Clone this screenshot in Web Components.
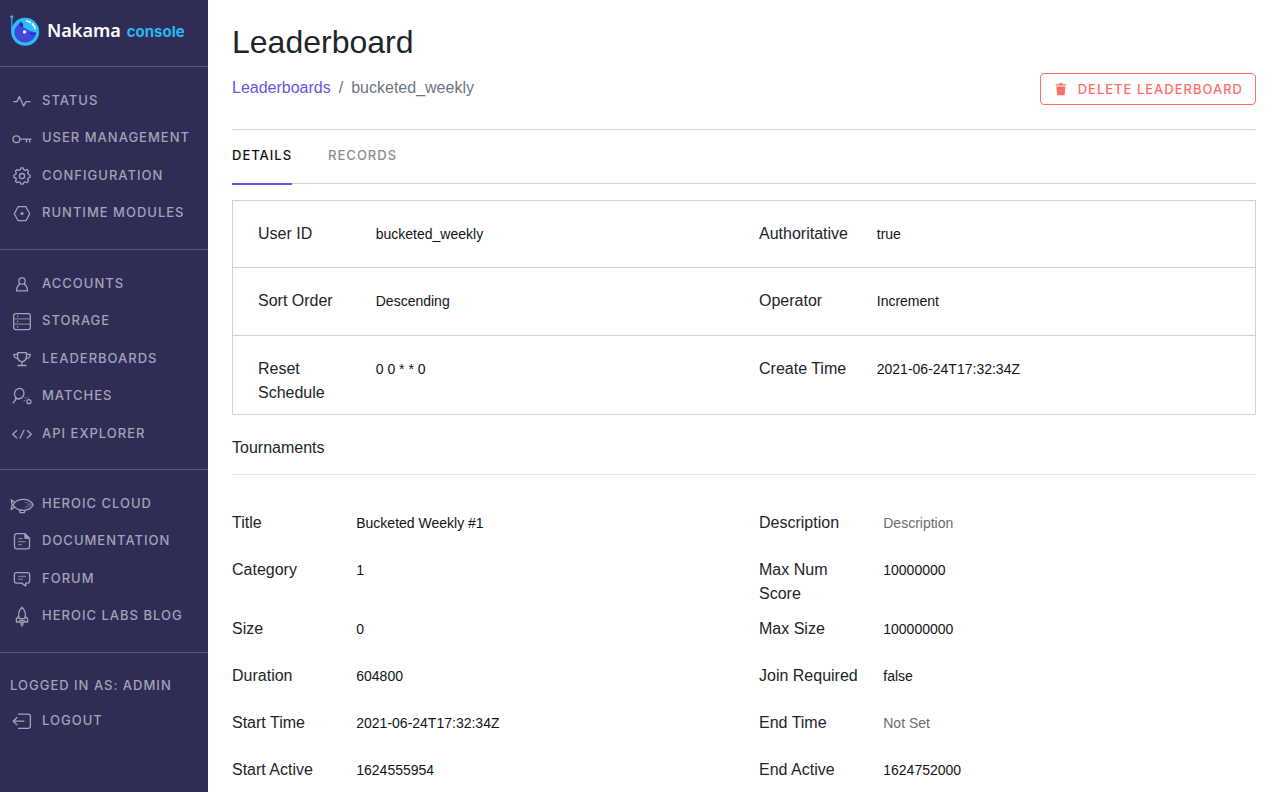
<!DOCTYPE html>
<html lang="en">
<head>
<meta charset="utf-8">
<meta name="viewport" content="width=device-width, initial-scale=1">
<title>Nakama Console - Leaderboard</title>
<style>
  :root {
    --navy: #2f2d56;
    --violet: #6d52e3;
    --coral: #ff6d69;
    --ink: #212529;
    --rule: #d2d0e0;
    --ui: Inter, "Open Sans", sans-serif;
  }
  body { margin: 0; color: var(--ink); background: #fff; font: 16px/24px "Liberation Sans", Arial, sans-serif; }
</style>
</head>
<body>
<console-app>
  <console-sidebar slot="side">
    <nav-section>
      <nav-item icon="pulse">STATUS</nav-item>
      <nav-item icon="key">USER MANAGEMENT</nav-item>
      <nav-item icon="gear">CONFIGURATION</nav-item>
      <nav-item icon="hex">RUNTIME MODULES</nav-item>
    </nav-section>
    <nav-section>
      <nav-item icon="user">ACCOUNTS</nav-item>
      <nav-item icon="storage">STORAGE</nav-item>
      <nav-item icon="trophy">LEADERBOARDS</nav-item>
      <nav-item icon="racket">MATCHES</nav-item>
      <nav-item icon="code">API EXPLORER</nav-item>
    </nav-section>
    <nav-section>
      <nav-item icon="blimp">HEROIC CLOUD</nav-item>
      <nav-item icon="doc">DOCUMENTATION</nav-item>
      <nav-item icon="chat">FORUM</nav-item>
      <nav-item icon="rocket">HEROIC LABS BLOG</nav-item>
    </nav-section>
    <session-info slot="session" user="ADMIN"></session-info>
  </console-sidebar>

  <page-header heading="Leaderboard" parent="Leaderboards" current="bucketed_weekly">
    <delete-button slot="action">DELETE LEADERBOARD</delete-button>
  </page-header>
  <tab-bar>
    <tab-link active>DETAILS</tab-link>
    <tab-link>RECORDS</tab-link>
  </tab-bar>
  <info-card>
    <info-row>
      <info-field label="User ID">bucketed_weekly</info-field>
      <info-field label="Authoritative">true</info-field>
    </info-row>
    <info-row>
      <info-field label="Sort Order">Descending</info-field>
      <info-field label="Operator">Increment</info-field>
    </info-row>
    <info-row>
      <info-field label="Reset Schedule">0 0 * * 0</info-field>
      <info-field label="Create Time">2021-06-24T17:32:34Z</info-field>
    </info-row>
  </info-card>
  <info-section heading="Tournaments">
    <info-row>
      <info-field label="Title">Bucketed Weekly #1</info-field>
      <info-field label="Description" empty>Description</info-field>
    </info-row>
    <info-row>
      <info-field label="Category">1</info-field>
      <info-field label="Max Num Score">10000000</info-field>
    </info-row>
    <info-row>
      <info-field label="Size">0</info-field>
      <info-field label="Max Size">100000000</info-field>
    </info-row>
    <info-row>
      <info-field label="Duration">604800</info-field>
      <info-field label="Join Required">false</info-field>
    </info-row>
    <info-row>
      <info-field label="Start Time">2021-06-24T17:32:34Z</info-field>
      <info-field label="End Time" empty>Not Set</info-field>
    </info-row>
    <info-row>
      <info-field label="Start Active">1624555954</info-field>
      <info-field label="End Active">1624752000</info-field>
    </info-row>
  </info-section>
</console-app>

<script>
  const define = (name, render) => customElements.define(name, class extends HTMLElement {
    connectedCallback() {
      if (!this.shadowRoot) this.attachShadow({ mode: 'open' }).innerHTML = render(this);
    }
  });

  const ICONS = {
    pulse: '<path d="M3.2 12.6H7L9.4 7.6 13.6 17 16 12.6H20.6"/>',
    key: '<circle cx="6.4" cy="13.2" r="3.4"/><path d="M9.8 13.2H21.4M16.5 13.2V16.4M19.7 13.2V16.4"/>',
    gear: '<path d="M10.4 5.6 10.8 3.9H13.2L13.6 5.6 15.4 6.4 17 5.5 18.6 7.1 17.7 8.7 18.4 10.5 20.1 11V13.3L18.4 13.7 17.7 15.5 18.6 17.1 17 18.7 15.4 17.8 13.6 18.6 13.2 20.2H10.8L10.4 18.6 8.6 17.8 7 18.7 5.4 17.1 6.3 15.5 5.6 13.7 3.9 13.3V11L5.6 10.5 6.3 8.7 5.4 7.1 7 5.5 8.6 6.4Z"/><circle cx="12" cy="12.1" r="2.6"/>',
    hex: '<path d="M8.1 5.7H15.9L19.7 12.7 15.9 19.7H8.1L4.3 12.7Z"/><circle cx="12" cy="12.6" r="1.5" fill="currentColor" stroke="none"/>',
    user: '<circle cx="12" cy="9" r="3.2"/><path d="M10 12.2C7.8 13.3 6.7 15.4 6.5 18.8H17.5C17.3 15.4 16.2 13.3 14 12.2"/>',
    storage: '<rect x="3.7" y="4.6" width="16.6" height="16" rx="2"/><path opacity=".65" d="M3.7 9.8H20.3M3.7 15.2H20.3"/><path d="M7 7.4H8.2M7 12.5H8.2M7 17.8H8.2"/>',
    trophy: '<path d="M7.6 5.7H16.4V9.5C16.4 12.6 14.6 14.2 12 14.8 9.4 14.2 7.6 12.6 7.6 9.5ZM7.6 7.3H3.7C3.9 9.8 5.4 11.4 8.1 11.9M16.4 7.3H20.3C20.1 9.8 18.6 11.4 15.9 11.9M12 14.8V18.4M7.4 18.5H16.6"/>',
    racket: '<ellipse cx="9.2" cy="9.6" rx="4.7" ry="5.2" transform="rotate(20 9.2 9.6)"/><path d="M5.8 13.2 5.4 16 2.9 19.4M6.2 14.6 9.2 15"/><circle cx="18.9" cy="17.7" r="2"/><path opacity=".6" d="M15 13.2 16.4 14.4M18 13.2 18.4 14M13.6 16.7H15.2"/>',
    code: '<path d="M7 8.3 2.7 12.2 7 16.2M17 8.3 21.3 12.2 17 16.2M14.2 7.8 9.8 16.8"/>',
    blimp: '<path d="M3.1 12.7C5 9.2 9 7.3 13.4 7.3 18 7.3 21.4 9.3 23.3 12.8 21.4 16.3 18 18.3 13.4 18.3 9 18.3 5 16.4 3.1 12.7ZM4.8 10.5 1.2 7.8 2.1 12.7 1.2 17.6 4.8 14.9M9.6 18 10 20.6H14.4L15 18.2"/><path opacity=".6" stroke-width=".8" d="M14.8 10.4C17 10.3 19 11 21 12.4M16.8 12.8H22.6M14.8 15.2C17 15.3 19 14.6 21 13.2"/>',
    doc: '<path d="M6.3 4.7H15L19.5 9.2V17.6Q19.5 19.8 17.3 19.8H6.7Q4.5 19.8 4.5 17.6V6.9Q4.5 4.7 6.7 4.7"/><path d="M15 4.7V9.2H19.5" fill="currentColor"/><path opacity=".65" d="M8 9.6H12.8M8 12.6H15.8M8 15.6H11.8"/>',
    chat: '<path d="M6.4 5.7H17.6Q19.6 5.7 19.6 7.7V14.1Q19.6 16.1 17.6 16.1H15.7V19L11.7 16.1H6.4Q4.4 16.1 4.4 14.1V7.7Q4.4 5.7 6.4 5.7Z"/><path opacity=".6" d="M8 9.5H16M8 12.3H13"/>',
    rocket: '<path d="M9.2 14.6C7.8 10.2 9.1 6.1 12 3.3 14.9 6.1 16.2 10.2 14.8 14.6ZM8.9 11.9 6.4 15V18H9.4L9.8 16.6H14.2L14.6 18H17.6V15L15.1 11.9M10.2 18.4H13.8M12 19V22.8"/><path opacity=".7" d="M12 14.6V17M10.5 19.2 11 21M13.5 19.2 13 21"/>',
    logout: '<path d="M8 5.1H18Q20.4 5.1 20.4 7.5V17Q20.4 19.4 18 19.4H8M14.3 12.2H3.2M7.3 8.3 3.2 12.2 7.3 16.1"/>'
  };
  const icon = name => `<svg width="24" height="24" viewBox="0 0 24 24" fill="none" stroke="currentColor" stroke-width="1.3" stroke-linejoin="round" aria-hidden="true">${ICONS[name]}</svg>`;

  const itemCss = `
    a { display: flex; align-items: center; gap: 8px; padding: 0 10px; color: #a4a2b6; text-decoration: none;
        font: 500 13px/24px var(--ui); letter-spacing: 1px; white-space: nowrap; }
    svg { flex: none; }
    span { padding-bottom: 2px; }`;

  define('console-app', () => `
    <style>
      :host { display: grid; grid-template-columns: 208px minmax(0, 1fr); min-height: 100vh; }
      main { padding: 22px 20px 0 24px; }
    </style>
    <slot name="side"></slot>
    <main><slot></slot></main>`);

  define('console-sidebar', () => `
    <style>
      :host { display: block; background: var(--navy); }
      .brand { display: flex; align-items: center; padding: 15px 10px 19px; gap: 7px;
               border-bottom: 1px solid #5a5778; text-decoration: none; }
      .words { display: flex; align-items: baseline; gap: 6px; }
      .name { color: #fff; font: 600 18px/28px "Noto Sans", sans-serif; }
      .sub { color: #2cb5f5; font: 700 15px/28px var(--ui); }
    </style>
    <a class="brand" href="#home">
      <svg width="30" height="32" viewBox="0 0 30 32" aria-hidden="true">
        <path d="M1.8 2V18" stroke="#2cb5f5" stroke-width="1.2"/>
        <circle cx="1.8" cy="1.8" r="1.6" fill="#2cb5f5"/>
        <circle cx="15.2" cy="16.8" r="14" fill="#2cbcfa"/>
        <path d="M10 7 12.6 9 13 12 19 15.6 26.2 17.8C25.4 23.6 20.8 27.4 15.2 27.4 9 27.4 4.4 22.8 4.4 17.2 4.4 13.6 6.2 10.6 9.3 8.9Z" fill="#4047dc"/>
        <path d="M10.2 6.4 13 8.8 13.2 12.2 9.4 10.8Z" fill="#2325a8"/>
        <path d="M17.4 17.8 26.2 17.8 24.8 20.8Z" fill="#2b2fc0"/>
        <circle cx="14.6" cy="17" r="1.7" fill="#fff"/>
        <path d="M16.6 6Q19 6.4 20.4 7.4M22.4 9Q24.6 11 25.2 13.6" fill="none" stroke="#fff" stroke-width="1.7" stroke-linecap="round"/>
      </svg>
      <span class="words"><span class="name">Nakama</span><span class="sub">console</span></span>
    </a>
    <nav><slot></slot></nav>
    <slot name="session"></slot>`);

  define('nav-section', () => `
    <style>
      :host { display: grid; grid-auto-rows: 37px 38px; align-items: center; padding: 15px 0 17px; border-bottom: 1px solid #5a5778; }
    </style>
    <slot></slot>`);

  define('nav-item', el => `
    <style>:host { display: block; }${itemCss}</style>
    <a href="#${el.getAttribute('icon')}">${icon(el.getAttribute('icon'))}<span><slot></slot></span></a>`);

  define('session-info', el => `
    <style>
      :host { display: grid; gap: 11px; padding: 20px 0; }
      p { margin: 0; padding: 0 10px; color: #a4a2b6; font: 500 13px/24px var(--ui); letter-spacing: 1px; }
      ${itemCss}
    </style>
    <p>LOGGED IN AS: ${el.getAttribute('user')}</p>
    <a href="#logout">${icon('logout')}<span>LOGOUT</span></a>`);

  define('page-header', el => `
    <style>
      :host { display: block; border-bottom: 1px solid var(--rule); padding-bottom: 24px; }
      h1 { margin: 0 0 11px; font-size: 32px; line-height: 40px; font-weight: 400; }
      .bar { display: flex; justify-content: space-between; align-items: center; }
      ol { display: flex; gap: 8px; margin: 0; padding: 0 0 2px; list-style: none; color: #6c757d; }
      a { color: var(--violet); text-decoration: none; }
      li + li::before { content: "/"; padding-right: 8px; }
    </style>
    <h1>${el.getAttribute('heading')}</h1>
    <div class="bar">
      <nav aria-label="Breadcrumb"><ol><li><a href="#leaderboards">${el.getAttribute('parent')}</a></li><li>${el.getAttribute('current')}</li></ol></nav>
      <slot name="action"></slot>
    </div>`);

  define('delete-button', () => `
    <style>
      :host { display: block; }
      button { display: flex; align-items: center; gap: 10px; height: 32px; padding: 0 12px 0 14px; color: var(--coral); background: #fff;
               border: 1px solid var(--coral); border-radius: 4px; font: 500 13px/20px var(--ui); letter-spacing: 1px; cursor: pointer; }
    </style>
    <button type="button">
      <svg width="13" height="14" viewBox="0 0 13 14" fill="currentColor" aria-hidden="true"><path d="M0.6 2.2H3.8L4.4 1.2H7.4L8 2.2H11.2V3.6H0.6ZM1.4 4.6H10.4L9.6 13.2H2.2Z"/></svg>
      <span><slot></slot></span>
    </button>`);

  define('tab-bar', () => `
    <style>
      :host { display: block; border-bottom: 1px solid var(--rule); }
      nav { display: flex; gap: 36px; }
    </style>
    <nav><slot></slot></nav>`);

  define('tab-link', () => `
    <style>
      :host { display: block; margin-bottom: -2px; }
      a { display: block; padding: 13px 0 16px; color: #8b8b8b; border-bottom: 2px solid transparent; text-decoration: none;
          font: 500 13px/24px var(--ui); letter-spacing: 1px; }
      :host([active]) a { color: #111; border-color: var(--violet); }
    </style>
    <a href="#tab"><slot></slot></a>`);

  define('info-card', () => `
    <style>
      :host { display: grid; grid-template-rows: minmax(67px, auto) minmax(68px, auto) auto; margin-top: 16px; border: 1px solid var(--rule); }
      ::slotted(info-row) { padding: 21px 25px 9px; border-bottom: 1px solid var(--rule); }
      ::slotted(info-row:last-child) { border-bottom: 0; }
    </style>
    <slot></slot>`);

  define('info-section', el => `
    <style>
      :host { display: block; margin-top: 21px; }
      h2 { margin: 0 0 36px; padding-bottom: 14px; border-bottom: 1px solid #e0e0e2; font-size: 16px; line-height: 24px; font-weight: 400; }
      ::slotted(info-row) { min-height: 36px; padding-bottom: 11px; }
      ::slotted(info-row:last-child) { min-height: 24px; padding-bottom: 0; }
    </style>
    <h2>${el.getAttribute('heading')}</h2>
    <slot></slot>`);

  define('info-row', () => `
    <style>:host { display: grid; grid-template-columns: 1fr 1fr; gap: 30px; }</style>
    <slot></slot>`);

  define('info-field', el => `
    <style>
      :host { display: block; }
      dl { display: grid; grid-template-columns: 25% 75%; margin: 0; }
      dt { padding-right: 15px; }
      dd { margin: 0; font-size: 14px; color: #111417; }
      :host([empty]) dd { color: #6c6c6c; }
    </style>
    <dl><dt>${el.getAttribute('label')}</dt><dd><slot></slot></dd></dl>`);
</script>
</body>
</html>
